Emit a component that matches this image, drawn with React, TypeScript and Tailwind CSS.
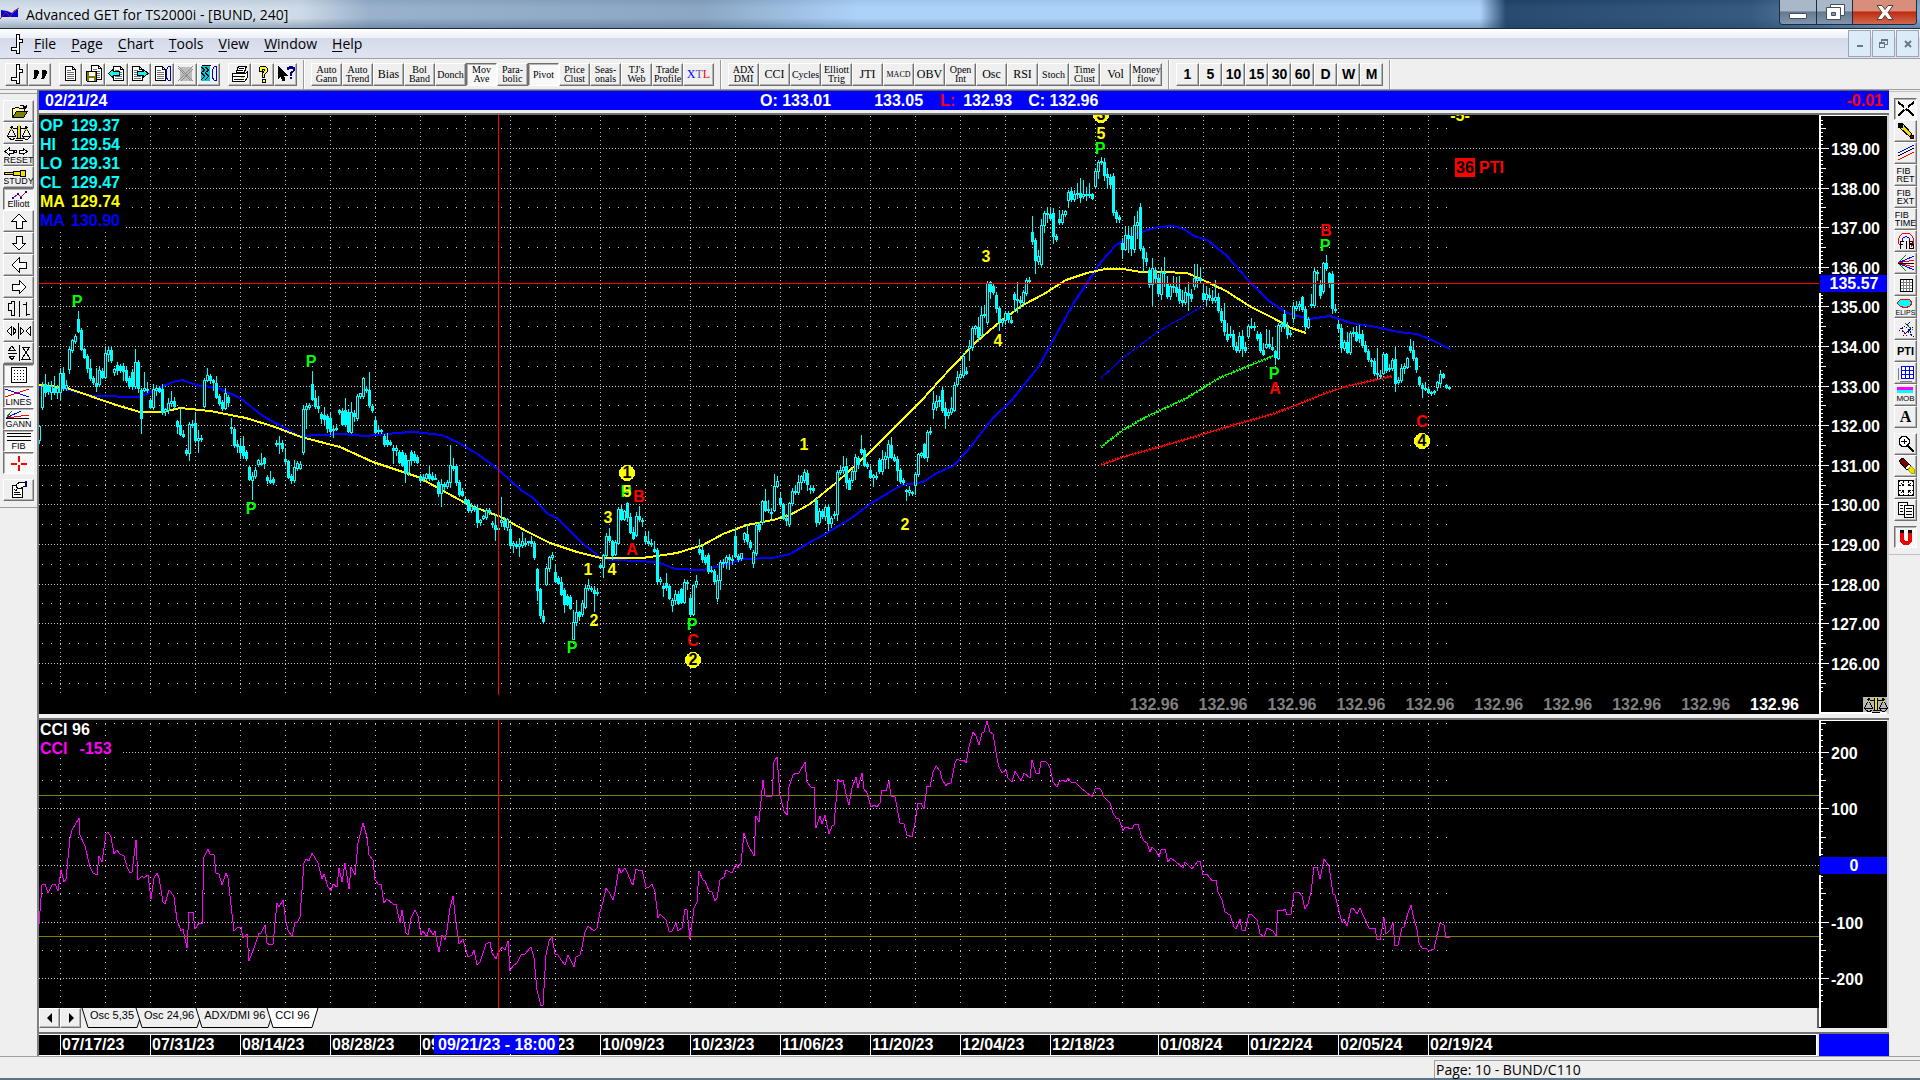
import React from 'react';
import clsx from 'clsx';

// ---------------------------------------------------------------------------
// Dados do gráfico
// ---------------------------------------------------------------------------

// cada bloco: x inicial e barras "máxima abertura fechamento mínima", uma a cada 3px
const BAR_RUNS: [number, string][] = [
  [39, '425 440 426 443,382 407 386 409,374 384 392 396,382 386 391 394,381 392 386 399,376 388 392 394,385 392 388 398,368 392 373 400,367 373 388 390,380 388 385 390,346 369 349 373,339 350 340 352,334 341 336 343,311 319 331 332,328 330 349 350,348 349 357 358,354 356 368 372,359 368 378 380,376 378 382 384,368 383 386 391,366 384 370 386,368 371 377 378,347 377 353 378,346 354 350 361,346 350 360 362,368 372 369 375,362 365 370 374,364 366 370 372,363 366 371 380,366 370 380 382,376 378 386 388,369 372 386 389,349 386 362 388,360 362 388 392,388 390 418 433,372 390 388 391,382 389 390 392,398 400 407 408,384 407 389 409,385 390 388 395,386 388 391 392,384 389 412 414,408 411 409 415,398 410 403 413,391 403 401 406,397 401 406 408'],
  [177, '420 421 426 433,409 425 434 435,430 434 436 437,448 450 453 455,422 453 424 460,420 424 425 427,413 423 440 442,430 440 438 452,435 438 438 441,378 406 380 407,368 380 375 381,374 376 380 383,379 380 382 390,376 383 397 398,394 396 403 405,400 402 408 410,388 408 393 409,395 397 402 406,418 427 428 433,427 429 445 447,440 444 446 452,438 446 452 458,436 446 455 458,450 452 458 460,465 467 479 480,472 480 476 499,467 476 470 478,459 464 460 466,453 463 463 465,457 458 463 468,475 477 480 483,471 480 482 483,477 479 482 484,440 444 443 446,436 444 443 453,440 443 448 451,449 459 461 463,460 461 477 478,474 476 480 483,460 480 467 482,461 468 463 470,461 468 464 469'],
  [303, '406 452 409 454,403 409 406 428,403 407 405 409,371 384 399 400,390 398 406 408,396 406 408 412,412 414 418 423,407 415 419 424,414 416 428 432,413 418 431 434,426 430 429 437,424 429 428 430,409 410 412 414,408 411 424 425,398 410 424 426,409 412 431 432,402 432 412 433,410 413 416 421,394 418 396 420,393 396 393 398,377 396 378 398,387 389 390 392,372 390 405 407,404 406 410 412,417 420 432 433,425 430 430 433,429 430 431 433,434 436 444 446,433 440 444 446,440 442 444 445,446 448 450 463,445 450 448 455,450 452 462 463,450 452 465 466,453 455 473 482,461 472 460 475,450 452 460 464,451 454 460 462,455 457 462 463'],
  [420, '474 476 480 482,474 477 478 481,473 478 474 480,466 474 478 480,472 476 479 480,474 478 478 479,480 482 493 496,479 493 484 506,482 484 486 490,480 486 482 488,445 482 465 487,458 466 468 470,464 466 482 484,480 482 494 496,488 491 495 496,497 499 502 504,499 500 510 512,503 510 506 512,504 507 509 511,505 508 522 527,519 522 520 525,515 518 516 519,508 517 510 519,508 510 512 514,521 523 524 527,514 525 529 540,524 529 528 534,497 522 520 526,517 521 526 529,518 527 519 530,525 529 545 547,541 545 543 552,541 544 546 548,538 546 544 556,532 545 541 547,538 543 544 546,541 542 541 545,536 541 543 546,541 543 557 559,568 569 590 600,588 589 615 618,610 616 621 622,566 584 568 585,556 568 557 571,552 557 555 559,565 572 581 582,576 578 583 584,577 582 594 595,588 590 604 612,594 596 604 605,595 597 608 609'],
  [573, '610 639 622 639,600 622 612 625,611 612 616 620,600 614 603 616,585 607 588 608,579 588 585 590,586 588 589 591,586 590 593 611,588 592 593 595,563 565 567 568,554 567 555 577,533 555 536 556,528 536 540 542,540 541 555 559,540 554 542 555,507 543 509 544,505 509 519 520,510 519 511 520,502 503 517 521,513 517 532 533,527 532 538 539,512 535 516 536,506 516 519 521,518 520 520 526,531 536 541 543,531 541 543 545,539 543 544 546,541 549 551 552,548 550 581 583,577 581 579 583,583 586 588 596,573 583 587 590,584 586 598 599,598 605 600 611,590 600 594 604,591 594 603 604,588 589 602 603,579 602 582 603,580 582 583 589,594 598 614 615,584 614 585 615,575 584 581 587'],
  [699, '539 549 552 554,545 550 559 562,555 557 562 564,553 555 571 573,566 571 570 572,569 571 581 583,575 598 580 601,560 580 562 589,559 563 562 567,555 562 557 568,554 557 559 569,555 559 560 564,527 536 556 557,554 556 559 561,553 558 553 560,532 539 533 542,525 534 541 543,540 542 547 549,550 563 552 567,523 553 525 555,522 524 529 531,500 522 501 523,489 501 510 511,500 509 510 512,508 513 512 518,474 510 486 511,476 486 481 487,493 498 504 506,503 504 518 519,514 518 520 525,502 524 503 526,488 503 491 505,485 492 491 494,475 492 482 494,475 482 476 489,469 480 472 482,470 473 484 490,485 488 489 493,485 488 490 492'],
  [816, '498 500 522 526,508 522 511 524,509 511 516 518,505 516 507 519,504 507 523 530,516 523 518 527,511 515 514 518,470 514 472 520,466 472 470 474,456 470 467 473,458 466 482 488,478 480 489 489,468 480 471 482,454 471 457 479,456 458 464 468,435 449 452 454,448 450 465 466,462 464 466 468,466 470 477 478,474 477 475 486,472 477 476 479,458 460 471 473,450 471 459 474,452 459 456 468,440 457 444 468,437 445 457 458,454 457 460 461,456 459 470 480,468 470 481 483,478 480 482 484,489 490 491 500,486 492 490 495,491 493 492 495,472 485 474 494,453 474 454 476,452 455 453 457,443 444 457 458,430 457 432 461,427 432 431 434'],
  [933, '391 409 403 418,395 407 401 410,396 401 400 406,386 390 410 412,402 408 415 428,409 415 412 418,397 412 408 414,382 410 385 411,371 384 377 386,370 377 374 378,353 375 356 377,367 371 373 374,340 348 346 360,326 347 328 350,325 328 326 334,317 327 337 341,306 335 315 336,305 315 314 317,281 322 283 324,281 282 291 298,284 286 292 294,292 295 308 312,306 308 321 330,318 322 320 326,311 320 313 323,311 313 319 322,316 320 322 323,292 294 299 311,282 299 300 312,296 300 302 308,290 302 292 304,278 293 280 295,277 281 280 283'],
  [1032, '216 232 241 244,238 240 260 273,250 261 256 264,219 264 225 266,211 225 213 232,207 214 213 222,207 214 218 220,208 213 236 243,234 236 239 241,210 219 222 224,210 222 214 224,210 214 211 216,190 200 192 206,187 191 199 201,190 199 194 201,183 194 193 198,178 193 197 202,180 196 194 198,187 194 195 200,183 195 194 197,193 194 198 199,169 186 171 187,160 171 162 178,157 162 161 164,158 162 175 180,168 174 177 188,174 177 184 187,173 176 212 215,210 212 218 222,215 217 219 222'],
  [1122, '238 243 249 258,226 249 235 250,226 235 238 252,228 236 248 255,216 249 225 252,211 225 222 238,203 207 248 250,246 248 258 271,252 258 261 265,268 270 284 287,258 284 268 305,267 270 278 282,274 278 293 295,268 294 272 299,257 272 273 286,276 283 296 298,283 296 286 299,276 286 287 292,277 287 292 296,276 289 300 303,290 300 302 305,287 302 292 304,282 293 295 310,289 294 298 301,264 286 278 289,264 280 278 287,267 278 280 283,285 293 299 301,286 299 294 306,288 295 297 300,290 298 300 303,280 300 297 302,293 297 310 312,308 311 320 322,303 320 331 335,323 334 339 341,326 334 334 337,330 334 346 349,342 346 350 352,332 350 336 352,330 336 348 356,342 347 350 352'],
  [1248, '324 336 326 338,318 327 326 328,322 326 327 330,331 334 338 340,332 334 350 352,343 350 354 355,329 347 344 348,330 344 346 348,337 347 349 350,350 351 357 364,323 358 325 359,321 326 324 331,310 314 326 328,322 327 334 338,330 333 334 336,302 318 306 322,301 308 306 310,301 306 304 310,296 297 309 311,307 309 326 330,317 327 319 328,294 304 305 307,268 305 271 307,270 272 272 280,280 285 295 298,262 291 263 293,255 263 268 270,272 273 283 287,271 274 308 313,304 309 309 312'],
  [1338, '321 324 328 331,324 328 347 352,340 348 342 350,332 342 352 353,331 352 333 354,327 332 332 336,327 332 340 341,325 334 338 342,330 334 345 347,341 345 351 352,349 351 359 361,358 360 361 366,358 361 373 375,348 373 374 378,370 375 376 378,353 373 354 374,353 354 370 372,364 369 368 371,358 368 360 370,347 359 383 391,377 382 380 384,364 380 368 382,363 368 366 373,357 367 358 368,339 346 350 352,341 350 358 360,357 358 369 372,376 377 384 385,383 385 388 397,382 388 389 390,386 389 392 393,391 393 392 395,390 391 392 394,381 387 382 390,370 383 374 387,373 374 377 378,384 385 387 388,386 387 387 389'],
];

const BARS = BAR_RUNS.flatMap(([x0, run]) =>
  run.split(',').map((bar, i) => {
    const [high, open, close, low] = bar.split(' ').map(Number);
    return { x: x0 + i * 3, high, open, close, low };
  })
);

const MA_YELLOW =
  '39,385 50,386 67,388 93,397 116,405 140,412 163,412 180,408 210,411 246,418 275,427 301,437 340,447 373,462 418,477 438,488 469,505 501,517 526,531 550,543 577,552 601,558 610,558 643,558 677,553 703,545 723,534 747,525 773,520 790,515 810,504 837,482 870,452 893,429 922,400 930,391 951,368 976,342 1001,321 1023,305 1044,294 1066,280 1087,273 1105,269 1123,269 1141,272 1162,272 1187,273 1201,279 1226,291 1251,307 1273,318 1291,328 1306,333';
const MA_BLUE =
  '39,387 60,388 93,396 140,397 161,387 173,382 182,380 199,386 216,387 240,398 263,416 299,436 324,435 342,434 365,436 397,433 414,432 442,435 459,443 479,455 499,470 522,491 532,497 548,514 557,518 581,542 601,558 610,560 643,561 660,563 675,569 703,570 727,564 743,559 773,558 790,554 807,544 827,533 850,519 870,504 893,490 903,485 923,482 937,473 953,466 968,450 993,418 1012,400 1039,366 1073,304 1087,283 1101,262 1116,245 1130,237 1144,231 1159,227 1173,226 1184,229 1194,236 1207,240 1226,255 1248,280 1269,301 1287,313 1309,319 1330,316 1351,323 1376,327 1398,332 1417,334 1434,341 1450,349';
const CHANNELS = [
  { color: '#0000ff', ticks: '1 8', points: '1101,378 1123,358 1159,331 1203,306' },
  { color: '#00ff00', ticks: '1 2', points: '1101,447 1123,430 1148,416 1187,398 1219,378 1273,356' },
  { color: '#ff0000', ticks: '1 2', points: '1101,465 1123,457 1159,447 1187,439 1223,428 1273,414 1294,406 1326,393 1344,387 1392,376' },
];

const CCI_LINE =
  '39,924 42,885 45,884 48,893 52,885 55,884 58,891 61,870 64,882 66,879 70,838 72,830 79,818 80,835 85,846 90,867 93,873 97,875 99,856 102,862 106,834 108,832 111,837 114,854 117,850 120,854 124,856 127,867 130,873 132,872 136,840 138,880 142,876 144,878 148,875 151,899 154,878 157,873 159,878 163,902 165,904 169,890 171,892 174,897 177,920 181,931 183,929 187,948 189,912 193,912 195,929 199,923 202,924 204,857 208,849 210,854 214,855 216,873 219,874 222,885 226,873 228,878 231,905 234,931 238,927 241,927 243,938 247,934 249,961 254,948 259,933 261,933 265,925 267,943 270,945 273,944 277,903 279,907 283,900 286,922 288,930 292,937 295,922 297,923 300,917 304,863 306,859 309,861 312,853 318,863 322,879 324,874 328,887 331,891 333,884 337,887 339,868 342,882 345,863 349,889 351,867 355,875 358,843 363,823 367,837 369,855 373,860 375,880 378,884 381,884 384,903 387,899 393,904 396,904 400,923 402,910 406,933 408,935 411,918 415,910 418,916 421,935 423,931 427,937 429,928 433,935 435,931 439,952 442,935 445,940 447,930 450,908 453,896 456,923 459,944 463,939 465,947 468,957 472,955 474,950 477,965 480,962 486,944 490,942 492,953 496,959 498,953 502,947 505,950 508,941 510,971 513,966 517,963 521,955 525,954 531,947 534,958 537,990 541,1006 543,1005 546,955 549,941 552,937 555,954 558,955 561,960 565,965 568,955 571,961 574,967 576,957 580,955 582,947 585,932 588,926 594,931 597,928 600,912 603,902 606,888 609,892 613,900 615,892 619,868 621,873 625,868 628,874 631,882 633,885 636,869 640,871 642,870 646,887 648,888 652,884 655,892 658,918 660,914 666,920 669,931 672,931 676,923 678,931 682,928 685,909 687,910 690,939 694,908 697,902 699,871 703,880 705,881 709,891 712,892 715,901 717,898 720,880 724,877 726,870 732,873 736,864 738,868 741,863 744,833 748,845 754,856 756,816 759,822 763,780 765,795 768,797 772,796 774,762 777,757 780,795 784,811 787,815 789,787 793,775 796,773 799,773 805,762 807,782 811,787 814,787 816,828 820,816 822,824 825,815 829,834 832,826 834,825 838,779 840,782 843,780 847,798 849,805 852,788 856,777 858,788 862,773 864,789 867,793 871,807 874,805 877,807 880,803 882,790 886,791 889,781 891,796 895,797 900,823 904,824 907,835 912,837 915,823 918,803 921,803 924,809 927,786 930,787 933,772 936,766 940,771 942,779 946,786 948,783 951,783 955,763 957,759 961,761 964,760 966,763 969,747 973,732 976,736 979,745 982,733 984,732 987,721 990,732 993,734 997,758 999,767 1002,773 1006,770 1008,778 1012,782 1015,771 1018,776 1021,781 1024,773 1030,778 1032,760 1036,773 1039,774 1041,762 1045,761 1048,764 1050,768 1053,782 1057,787 1059,782 1063,780 1066,782 1068,778 1071,782 1075,782 1081,788 1086,792 1092,797 1095,789 1099,788 1101,790 1104,797 1110,803 1113,813 1116,818 1119,819 1123,831 1125,827 1132,829 1134,825 1138,824 1141,835 1144,841 1147,843 1150,852 1152,847 1156,851 1159,857 1161,850 1165,849 1168,862 1171,858 1176,862 1183,868 1185,862 1192,869 1195,865 1198,861 1200,861 1203,875 1207,874 1212,881 1216,880 1218,892 1222,900 1225,912 1230,915 1234,927 1236,929 1240,919 1242,930 1245,931 1249,914 1251,914 1257,920 1260,934 1264,937 1267,928 1273,931 1276,936 1278,910 1282,911 1285,909 1287,915 1291,914 1294,893 1299,892 1302,896 1305,909 1308,904 1311,892 1314,867 1317,867 1320,879 1324,859 1327,863 1329,866 1333,894 1335,895 1342,923 1344,919 1347,926 1351,909 1353,908 1357,914 1360,908 1363,915 1369,928 1371,929 1375,928 1377,939 1380,940 1384,918 1386,934 1390,930 1393,923 1395,946 1398,945 1402,928 1404,927 1408,913 1411,905 1413,915 1417,930 1419,943 1422,948 1426,948 1429,951 1434,949 1437,935 1440,923 1444,925 1446,938 1450,937';

const GRID_X = [
  ...Array.from({ length: 24 }, (_, i) => 60 + i * 45),
  1122, 1158, 1203, 1248, 1293, 1338, 1383, 1428,
];

const LIME = '#00ff00';
const YELLOW = '#ffff00';
const RED = '#ff0000';

const WAVE_LABELS: [string, number, number, string][] = [
  ['P', 77, 307, LIME],
  ['P', 311, 367, LIME],
  ['P', 251, 514, LIME],
  ['P', 572, 653, LIME],
  ['3', 608, 523, YELLOW],
  ['1', 588, 575, YELLOW],
  ['4', 612, 575, YELLOW],
  ['2', 594, 626, YELLOW],
  ['P', 626, 497, LIME],
  ['5', 627, 497, YELLOW],
  ['B', 639, 502, RED],
  ['A', 632, 555, RED],
  ['1', 804, 450, YELLOW],
  ['2', 905, 530, YELLOW],
  ['P', 692, 630, LIME],
  ['C', 693, 646, RED],
  ['3', 986, 262, YELLOW],
  ['4', 998, 346, YELLOW],
  ['5', 1101, 139, YELLOW],
  ['P', 1100, 154, LIME],
  ['B', 1326, 236, RED],
  ['P', 1325, 251, LIME],
  ['P', 1274, 379, LIME],
  ['A', 1275, 394, RED],
  ['C', 1422, 427, RED],
  ['-5-', 1460, 121, YELLOW],
];

const WAVE_CIRCLES: [string, number, number][] = [
  ['1', 627, 473],
  ['2', 693, 660],
  ['3', 1101, 115],
  ['4', 1422, 441],
];

const priceY = (p: number) => Math.round(148 + (139 - p) * 39.6);
const cciY = (v: number) => Math.round(865 - v * 0.567);

// ---------------------------------------------------------------------------
// Botões das barras
// ---------------------------------------------------------------------------

const UP = 'border border-t-white border-l-white border-r-[#707070] border-b-[#707070] bg-[#efefef] shadow-[inset_-1px_-1px_0_#b4b4b4]';
const DOWN = 'border border-t-[#707070] border-l-[#707070] border-r-white border-b-white bg-[#f8f8f8] shadow-[inset_1px_1px_0_#b4b4b4]';

interface ToolProps {
  label: string;
  size: string;
  pressed?: boolean;
  children: React.ReactNode;
}

const Tool: React.FC<ToolProps> = ({ label, size, pressed, children }) => (
  <button
    type="button"
    aria-label={label}
    aria-pressed={pressed}
    className={clsx('flex shrink-0 items-center justify-center overflow-hidden', size, pressed ? DOWN : UP)}
  >
    {children}
  </button>
);

const Pix: React.FC<{ w?: number; h?: number; children: React.ReactNode }> = ({ w = 18, h = 18, children }) => (
  <svg width={w} height={h} viewBox={`0 0 ${w} ${h}`} fill="none" stroke="#000" shapeRendering="crispEdges" aria-hidden="true" className="shrink-0">
    {children}
  </svg>
);

const ScalesIcon = () => (
  <Pix w={25} h={16}>
    <path d="M12 0h2v13h-2z" fill="#e8e000" stroke="none" />
    <path d="M11.5 1v12M14.5 1v12M9 15.5h8M9.5 13.5h7M4 2.5h3M19 2.5h3M6.5 3.5h5M14.5 3.5h5M5 1.5h2M19 1.5h2" />
    <path d="M5.5 3.5L1.5 11M5.5 3.5l4 7.5M20.5 3.5l-4 7.5M20.5 3.5l4 7.5M1 11.5h9M15.5 11.5h9M2.5 12.5l2 1.5h3l2-1.5M17 12.5l2 1.5h3l2-1.5" />
    <path d="M3 4.5h4M18 4.5h4" stroke="#d8d000" />
  </Pix>
);

const PageIcon = ({ x = 2, y = 1 }: { x?: number; y?: number }) => (
  <g>
    <path d={`M${x + 0.5} ${y + 0.5}h7l3 3v11h-10z`} fill="#fff" />
    <path d={`M${x + 7.5} ${y + 0.5}v3h3`} />
    <path d={`M${x + 2} ${y + 4.5}h4M${x + 2} ${y + 6.5}h7M${x + 2} ${y + 8.5}h7M${x + 2} ${y + 10.5}h7M${x + 2} ${y + 12.5}h7`} stroke="#707070" />
  </g>
);

const BarIcon = () => (
  <Pix w={12} h={20}>
    <path d="M5.5 .5h3v5h3v3h-3v11h-3v-3h-5v-3h5z" fill="#fff" />
  </Pix>
);

const FILE_TOOLS: { label: string; icon: React.ReactNode }[][] = [
  [
    { label: 'Bar chart', icon: <BarIcon /> },
    {
      label: 'Quote',
      icon: (
        <Pix>
          <path d="M3 5h3l1 1v3l-2 4H3l2-3H3zM11 5h3l1 1v3l-2 4h-2l2-3h-2z" fill="#000" />
        </Pix>
      ),
    },
  ],
  [
    { label: 'New page', icon: <Pix><PageIcon x={3} /></Pix> },
    {
      label: 'Save pages',
      icon: (
        <Pix>
          <PageIcon x={6} y={0} />
          <path d="M1.5 6.5h10v10h-9l-1-1z" fill="#7a7a00" />
          <path d="M4 7h6v4H4zM4 13h5v3H4z" fill="#fff" stroke="none" />
        </Pix>
      ),
    },
    {
      label: 'Previous page',
      icon: (
        <Pix>
          <PageIcon x={5} />
          <path d="M.5 8.5l5-4.500v2.500h6v4h-6v2.500z" fill="#00ffff" />
        </Pix>
      ),
    },
    {
      label: 'Next page',
      icon: (
        <Pix>
          <PageIcon x={1} />
          <path d="M17 8.5l-5-4.500v2.500H6v4h6v2.500z" fill="#00ffff" />
        </Pix>
      ),
    },
    {
      label: 'Turn page',
      icon: (
        <Pix>
          <PageIcon x={1} />
          <path d="M14.500 1.500c-3 3-3 11 0 14M14 1.500h2v14h-2M12 12l2 3" stroke="#0000c0" />
        </Pix>
      ),
    },
    {
      label: 'Delete page',
      icon: (
        <Pix>
          <path d="M3 2h12v14H3z" fill="#bdbdbd" stroke="none" />
          <path d="M1 1l15 15M16 1L1 16M1 3l13 13M16 4L4 16" stroke="#8d8d8d" />
        </Pix>
      ),
    },
    {
      label: 'Refresh pages',
      icon: (
        <Pix>
          <path d="M1 1h9v15H1z" fill="#00c8d8" stroke="none" />
          <path d="M1 2l4 3-4 3 4 3-4 4M5 2l4 3-4 3 4 3-4 4M1.500 .5h9" />
          <path d="M14.500 1.500c-3 3-3 11 0 14M14 1.500h2v14h-2M12 12l2 3" stroke="#0000c0" />
        </Pix>
      ),
    },
  ],
  [
    {
      label: 'Print',
      icon: (
        <Pix>
          <path d="M5.5 7l2-6h8l-2 6zM1.5 8.5h13l2-2v6l-3 4h-12z" fill="#fff" />
          <path d="M8 3.5h5M7 5.5h5M2 11.5h12M3 14.5h10" />
          <path d="M10 12.5h3" stroke="#e0d000" />
        </Pix>
      ),
    },
    {
      label: 'Help',
      icon: (
        <Pix>
          <path d="M5 6V3l2-2h4l2 2v4l-3 3v2H8V9l2-3V4H8v2zM8 14h3v3H8z" fill="#ffff00" />
        </Pix>
      ),
    },
    {
      label: 'Context help',
      icon: (
        <Pix>
          <path d="M1 1v13l3-3 2 5 2-1-2-5h4z" fill="#000" />
          <path d="M11 5V3h1.500V2H15v1h1.500v3L14 8v3M14 12v2" stroke="#000080" strokeWidth="2" />
        </Pix>
      ),
    },
  ],
];

const STUDY_TOOLS = [
  'Auto|Gann', 'Auto|Trend', 'Bias', 'Bol|Band', 'Donch', 'Mov|Ave', 'Para-|bolic', 'Pivot', 'Price|Clust', 'Seas-|onals', "TJ's|Web", 'Trade|Profile', 'XTL',
];
const PRESSED_STUDIES = ['Mov|Ave', 'Pivot'];
const INDICATOR_TOOLS = [
  'ADX|DMI', 'CCI', 'Cycles', 'Elliott|Trig', 'JTI', 'MACD', 'OBV', 'Open|Int', 'Osc', 'RSI', 'Stoch', 'Time|Clust', 'Vol', 'Money|flow',
];
const INTERVALS = ['1', '5', '10', '15', '30', '60', 'D', 'W', 'M'];

const StudyButton: React.FC<{ name: string }> = ({ name }) => {
  const lines = name.split('|');
  const text = lines.join(' ');
  const compact = name === 'MACD' ? 'text-[8px]' : name.length > 4 ? 'text-[10px]' : 'text-[12px]';
  return (
    <Tool label={text} size="w-[31px] h-[23px]" pressed={PRESSED_STUDIES.includes(name)}>
      <span className={clsx('font-["Liberation_Serif",serif] text-center leading-[9px]', compact)}>
        {name === 'XTL' ? (
          <>
            <span className="text-[#0000ff]">X</span>
            <span className="text-[#7050a0]">T</span>
            <span className="text-[#ff0000]">L</span>
          </>
        ) : (
          lines.map((line) => (
            <span key={line} className="block">{line}</span>
          ))
        )}
      </span>
    </Tool>
  );
};

const Divider = () => <div className="mx-[6px] h-[29px] w-[2px] shrink-0 border-l border-[#9a9a9a] bg-white" />;

const Word: React.FC<{ children: string; className?: string }> = ({ children, className }) => (
  <span className={clsx('block text-[9px] leading-[8px]', className)}>{children}</span>
);

const LEFT_TOOLS: { label: string; pressed?: boolean; icon: React.ReactNode }[] = [
  {
    label: 'Open',
    icon: (
      <Pix w={20} h={17}>
        <path d="M3.5 14V5.5h2l1-1h3l1 1h5v3" fill="#fff6a0" />
        <path d="M3.5 14.5l4-6h11l-4 6z" fill="#808000" />
        <path d="M11 2.5h2l3 1v2M14 4.5h4M17.5 2v2" />
      </Pix>
    ),
  },
  { label: 'Scales', icon: <ScalesIcon /> },
  {
    label: 'Reset',
    icon: (
      <span>
        <Pix w={24} h={9}>
          <path d="M1 4.5L5 1v2h4v3H5v2zM23 4.5L19 1v2h-4v3h4v2zM10.5 3.5h2v2h-2z" fill="#fff" />
        </Pix>
        <Word className="text-[8px]">RESET</Word>
      </span>
    ),
  },
  {
    label: 'Study',
    icon: (
      <span>
        <Pix w={24} h={8}>
          <path d="M1.5 3h9v2h-9zM10.5 2h7v4h-7zM17.5 1h5v6h-5z" fill="#f0e000" />
        </Pix>
        <Word className="text-[8px]">STUDY</Word>
      </span>
    ),
  },
  {
    label: 'Elliott',
    pressed: true,
    icon: (
      <span>
        <Pix w={24} h={9}>
          <path d="M6 7l5-4 3 3 5-5" stroke="#ff0000" />
          <path d="M5 6h2v2H5zM10 2h2v2h-2zM13 6h2v2h-2zM18 0h2v2h-2z" fill="#0000ff" stroke="none" />
        </Pix>
        <span className="block text-[9px] leading-[8px]">Elliott</span>
      </span>
    ),
  },
  { label: 'Up', icon: <Pix><path d="M9 2l7 7h-4v7H6V9H2z" fill="#fff" /></Pix> },
  { label: 'Down', icon: <Pix><path d="M9 16l7-7h-4V2H6v7H2z" fill="#fff" /></Pix> },
  { label: 'Left', icon: <Pix><path d="M2 9l7-7v4h7v6H9v4z" fill="#fff" /></Pix> },
  { label: 'Right', icon: <Pix><path d="M16 9L9 2v4H2v6h7v4z" fill="#fff" /></Pix> },
  {
    label: 'Bar width',
    icon: (
      <Pix w={24} h={18}>
        <path d="M1.5 3v7h3v5h3V1h-3v2zM12.5 1v16M16 4.5h3M19.5 2v14M19 14.5h4" />
      </Pix>
    ),
  },
  {
    label: 'Spread bars',
    icon: (
      <Pix w={25} h={16}>
        <path d="M5 4v8L1 8zM7 4v8l3-4zM14 4v8l4-4zM24 4v8l-4-4z" fill="#fff" />
        <path d="M12.5 0v16" />
      </Pix>
    ),
  },
  {
    label: 'Scale bars',
    icon: (
      <Pix w={24} h={18}>
        <path d="M2 6l3-4 3 4zM2 12l3 4 3-4zM1 9.5h9M12.5 1v16M15 3h8l-4 5 4 7h-8l4-7z" />
      </Pix>
    ),
  },
  {
    label: 'Grid',
    pressed: true,
    icon: (
      <Pix>
        <path d="M1.5 1.5h15v15h-15z" fill="#fff" />
        <path d="M4 4.5h12M4 7.5h12M4 10.5h12M4 13.5h12" strokeDasharray="1 2" />
      </Pix>
    ),
  },
  {
    label: 'Lines',
    pressed: true,
    icon: (
      <span>
        <Pix w={25} h={10}>
          <path d="M0 1l24 8" stroke="#0000ff" />
          <path d="M0 9l24-8" stroke="#ff0000" />
        </Pix>
        <Word className="text-[8px]">LINES</Word>
      </span>
    ),
  },
  {
    label: 'Gann',
    pressed: true,
    icon: (
      <span>
        <Pix w={25} h={10}>
          <path d="M1 8.5h23" />
          <path d="M1 8l23-3M1 8l5-2" stroke="#ff0000" />
          <path d="M1 8l15-7" stroke="#0000ff" />
          <path d="M1 8l6-7" stroke="#008000" />
        </Pix>
        <Word className="text-[8px]">GANN</Word>
      </span>
    ),
  },
  {
    label: 'Fibonacci',
    pressed: true,
    icon: (
      <span>
        <Pix w={24} h={10}>
          <path d="M0 1.5h24M0 4.5h24M0 8.5h24" />
        </Pix>
        <Word className="text-[8px]">FIB</Word>
      </span>
    ),
  },
  { label: 'Crosshair', pressed: true, icon: <Pix><path d="M9 2v6M9 11v6M1 9.5h6M11 9.5h6" stroke="#ff0000" strokeWidth="2" /></Pix> },
];

const RIGHT_TOOLS: { label: string; pressed?: boolean; icon: React.ReactNode }[][] = [
  [
    {
      label: 'Cross',
      pressed: true,
      icon: (
        <Pix>
          <path d="M1 2l6 5M17 2l-6 5M1 16l6-6M17 16l-6-6" strokeWidth="2" />
          <path d="M9 8v3M8 9.5h3" />
        </Pix>
      ),
    },
    {
      label: 'Pencil',
      icon: (
        <Pix>
          <path d="M2 2l3-1 10 11-2 3L2 5z" fill="#f0e000" />
          <path d="M1 1h4v4H1z" fill="#000" />
          <path d="M13 13h3v3h-3z" fill="#800000" />
        </Pix>
      ),
    },
    {
      label: 'Parallel lines',
      icon: (
        <Pix>
          <path d="M1 9l16-8" stroke="#0000ff" />
          <path d="M1 12l16-8" />
          <path d="M1 16l16-8" stroke="#ff0000" />
        </Pix>
      ),
    },
    { label: 'Fib retracement', icon: <span className="text-left"><Word>FIB</Word><Word>RET</Word></span> },
    { label: 'Fib extension', icon: <span className="text-left"><Word>FIB</Word><Word>EXT</Word></span> },
    { label: 'Fib time', icon: <span className="text-left"><Word>FIB</Word><Word className="text-[8px]">TIME</Word></span> },
    {
      label: 'Fib arc',
      icon: (
        <Pix>
          <path d="M2 12C0 7 3 1 9 1s9 6 7 11l-2 3M2 12l2 2" stroke="#ff0000" />
          <path d="M5 10c0-7 8-7 8 0" stroke="#0000ff" />
          <path d="M3.5 9v8M4 9.5h3M4 12.5h2M9.5 9v8M12.5 9v8M13 9.5h2v2h-2M13 12.5h3v4h-3" />
        </Pix>
      ),
    },
    {
      label: 'Gann fan',
      icon: (
        <Pix>
          <path d="M1 9l8-8M1 9l8 8" stroke="#008000" />
          <path d="M1 9l16-7M1 9l16 7" stroke="#0000ff" />
          <path d="M1 9l16-3M1 9l16 4" stroke="#ff0000" />
          <path d="M1 9.5h16" />
        </Pix>
      ),
    },
    {
      label: 'Gann box',
      icon: (
        <Pix>
          <path d="M3.5 3.5h12v12h-12z" fill="#fff" />
          <path d="M6.5 4v11M9.5 4v11M12.5 4v11M4 6.5h11M4 9.5h11M4 12.5h11" stroke="#808080" />
        </Pix>
      ),
    },
    {
      label: 'Ellipse',
      icon: (
        <span>
          <Pix h={11}>
            <path d="M1 5l3-3 5-1 5 1 2 3-2 3-5 2-5-2z" fill="#00ffff" stroke="#ff0000" />
          </Pix>
          <span className="block text-[7px] leading-[7px]">ELIPS</span>
        </span>
      ),
    },
    {
      label: 'Pitchfork',
      icon: (
        <Pix>
          <path d="M2 11L13 2M11 12l6 5M6 16L17 6M9 7l6 7" stroke="#000090" strokeDasharray="2 1" />
          <path d="M3 8l7 8" stroke="#800000" strokeDasharray="2 1" />
          <path d="M8 3l8 7" stroke="#008000" strokeDasharray="2 1" />
        </Pix>
      ),
    },
    { label: 'PTI', icon: <span className="text-[11px] font-bold">PTI</span> },
    {
      label: 'Grid tool',
      icon: (
        <Pix>
          <path d="M1.5 4v12M3 17.5h12" stroke="#808080" />
          <path d="M4.5 2.5h12v12h-12zM8.5 3v11M12.5 3v11M5 6.5h11M5 10.5h11" fill="#fff" stroke="#0000ff" />
        </Pix>
      ),
    },
    {
      label: 'MOB',
      icon: (
        <span>
          <Pix h={7}>
            <path d="M1 0h16v3H1z" fill="#ff00ff" stroke="none" />
            <path d="M1 3h16v3H1z" fill="#00ffff" stroke="none" />
          </Pix>
          <span className="block text-[8px] leading-[9px]">MOB</span>
        </span>
      ),
    },
    { label: 'Text', icon: <span className='font-["Liberation_Serif",serif] text-[16px] leading-[16px] font-bold'>A</span> },
  ],
  [
    {
      label: 'Zoom',
      icon: (
        <Pix>
          <path d="M5 1.5h4l3 3v4l-3 3H5l-3-3v-4zM4 6.5h6M7 4v5" fill="#fff" />
          <path d="M11 11l6 6" strokeWidth="2" />
        </Pix>
      ),
    },
    {
      label: 'Eraser',
      icon: (
        <Pix>
          <path d="M2 4l4-3 6 6-4 4z" fill="#800000" />
          <path d="M8 11l4-4 2 2-4 4z" fill="#fff" />
          <path d="M11 13l3-4 3 3v4h-3z" fill="#f0e000" stroke="#a0a000" />
        </Pix>
      ),
    },
    {
      label: 'Fit',
      icon: (
        <Pix>
          <path d="M1.5 1.5h15v15h-15z" fill="#fff" />
          <path d="M2 2l5 5M16 2l-5 5M2 16l5-5M16 16l-5-5M2 6.5h4M6.5 2v4M11.5 2v4M12 6.5h4M2 11.5h4M6.5 12v4M11.5 12v4M12 11.5h4" strokeDasharray="2 1" />
        </Pix>
      ),
    },
    {
      label: 'Pages',
      icon: (
        <Pix>
          <path d="M1.5 1.5h9v12h-9z" fill="#fff" />
          <path d="M7.5 4.5h9v12h-9z" fill="#fff" />
          <path d="M3 4.5h3M3 7.5h3M3 10.5h3M9 7.5h6M9 10.5h6M9 13.5h6" />
        </Pix>
      ),
    },
  ],
  [
    {
      label: 'Magnet',
      pressed: true,
      icon: (
        <Pix>
          <path d="M3 5v8l3 4h6l3-4V5h-4v7l-1 1H8l-1-1V5z" fill="#ee0000" stroke="none" />
          <path d="M3 2h4v3H3zM11 2h4v3h-4z" fill="#000" stroke="none" />
        </Pix>
      ),
    },
  ],
];

// ---------------------------------------------------------------------------
// Gráficos
// ---------------------------------------------------------------------------

interface GridProps {
  top: number;
  bottom: number;
  major: number[];
  minor: number[];
  step: string;
}

// as linhas principais passam da borda direita e são cortadas pelo svg
const Grid: React.FC<GridProps> = ({ top, bottom, major, minor, step }) => (
  <g stroke="#c8c8c8">
    {GRID_X.map((x) => (
      <path key={x} d={`M${x + 0.5} ${top}V${bottom}`} strokeDasharray={step} />
    ))}
    {major.map((y) => (
      <path key={y} d={`M39 ${y + 0.5}H4000`} strokeDasharray="1 2" />
    ))}
    {minor.map((y) => (
      <path key={y} d={`M42 ${y + 0.5}H1449`} strokeDasharray="1 8" />
    ))}
  </g>
);

const PriceChart: React.FC = () => (
  <svg className='block h-[582px] w-full font-["Liberation_Sans",Arial,sans-serif] text-[16px] font-bold' role="img" aria-label="BUND 240 price chart">
    <g transform="translate(-39 -115)" shapeRendering="crispEdges" fill="none">
      <Grid
        top={116}
        bottom={694}
        major={Array.from({ length: 14 }, (_, i) => priceY(139 - i))}
        minor={Array.from({ length: 15 }, (_, i) => priceY(139.5 - i))}
        step="1 3"
      />
      <polyline points={MA_BLUE} stroke="#0000ff" strokeWidth="2" />
      <polyline points={MA_YELLOW} stroke="#ffff00" strokeWidth="2" />
      {CHANNELS.map((c) => (
        <g key={c.color} stroke={c.color}>
          <polyline points={c.points} />
          <polyline points={c.points} strokeWidth="3" strokeDasharray={c.ticks} />
        </g>
      ))}
      {BARS.map(({ x, high, open, close, low }) => {
        const top = Math.min(open, close);
        const height = Math.max(Math.abs(open - close), 1);
        return (
          <g key={x}>
            <path d={`M${x + 0.5} ${high}V${low + 1}`} stroke="#00ffff" />
            <rect x={x - 0.5} y={top + 0.5} width="2" height={height} stroke="#00ffff" fill={close < open ? '#000' : '#00ffff'} />
          </g>
        );
      })}
      <path d="M39 283.5H4000" stroke="#ff0000" />
      <path d="M498.5 115V695" stroke="#ff0000" />
      {WAVE_CIRCLES.map(([n, x, y]) => (
        <g key={n}>
          <circle cx={x} cy={y} r="8" fill="#ffff00" />
          <text x={x} y={y + 5} textAnchor="middle" fill="#000">{n}</text>
        </g>
      ))}
      {WAVE_LABELS.map(([t, x, y, color]) => (
        <text key={`${t}-${x}`} x={x} y={y} textAnchor="middle" fill={color}>{t}</text>
      ))}
      <rect x="1455" y="158" width="20" height="19" fill="#ff0000" />
      <text x="1456" y="173" fill="#000">36</text>
      <text x="1479" y="173" fill="#ff0000">PTI</text>
    </g>
  </svg>
);

const CciChart: React.FC = () => (
  <svg className="block h-[288px] w-full" role="img" aria-label="CCI 96 indicator">
    <g transform="translate(-39 -720)" shapeRendering="crispEdges" fill="none">
      <Grid
        top={724}
        bottom={1004}
        major={[200, 100, 0, -100, -200].map(cciY)}
        minor={[250, 150, 50, -50, -150].map(cciY)}
        step="1 4.670"
      />
      {[795.5, 936.5].map((y) => (
        <path key={y} d={`M39 ${y}H4000`} stroke="#808000" />
      ))}
      <polyline points={CCI_LINE} stroke="#ff00ff" />
      <path d="M498.5 720V1008" stroke="#ff0000" />
    </g>
  </svg>
);

interface AxisProps {
  height: string;
  label: string;
  origin: number;
  ticks: { y: number; size: number }[];
  labels: { y: number; text: string }[];
  cursor: { y: number; text: string };
}

const Axis: React.FC<AxisProps> = ({ height, label, origin, ticks, labels, cursor }) => (
  <svg className={clsx('block w-full font-["Liberation_Sans",Arial,sans-serif] text-[16px] font-bold', height)} role="img" aria-label={label}>
    <g transform={`translate(0 ${-origin})`} fill="#fff" shapeRendering="crispEdges">
      <rect x="0" y={origin} width="2" height="700" />
      <rect x="0" y={origin} width="68" height="1" />
      {ticks.map((t) => (
        <rect key={t.y} x="2" y={t.y} width={t.size} height="1" />
      ))}
      {labels.map((l) => (
        <text key={l.text} x="12" y={l.y + 7}>{l.text}</text>
      ))}
      <rect x="0" y={cursor.y - 9} width="70" height="19" fill="#000" />
      <rect x="1" y={cursor.y - 8} width="68" height="17" fill="#0000ff" />
      <text x="35" y={cursor.y + 6} textAnchor="middle">{cursor.text}</text>
    </g>
  </svg>
);

const PRICE_TICKS = Array.from({ length: 145 }, (_, i) => ({
  y: priceY(139.7 - i / 10),
  size: (i - 7) % 10 === 0 ? 8 : (i - 2) % 5 === 0 ? 5 : 2,
}));
const PRICE_LABELS = Array.from({ length: 14 }, (_, i) => ({ y: priceY(139 - i), text: `${139 - i}.00` }));
const CCI_TICKS = Array.from({ length: 50 }, (_, i) => ({
  y: cciY(250 - i * 10),
  size: (i - 5) % 10 === 0 ? 8 : i % 5 === 0 ? 5 : 2,
}));
const CCI_LABELS = [200, 100, -100, -200].map((v) => ({ y: cciY(v), text: String(v) }));

const LEGEND = [
  ['OP', '129.37', 'text-[#00ffff]'],
  ['HI', '129.54', 'text-[#00ffff]'],
  ['LO', '129.31', 'text-[#00ffff]'],
  ['CL', '129.47', 'text-[#00ffff]'],
  ['MA', '129.74', 'text-[#ffff00]'],
  ['MA', '130.90', 'text-[#0000ff]'],
];

const DATES = ['07/17/23', '07/31/23', '08/14/23', '08/28/23', '09/11/23', '09/25/23', '10/09/23', '10/23/23', '11/06/23', '11/20/23', '12/04/23', '12/18/23', '01/08/24', '01/22/24', '02/05/24', '02/19/24'];
const TABS = ['Osc 5,35', 'Osc 24,96', 'ADX/DMI 96', 'CCI 96'];
const MENUS = ['File', 'Page', 'Chart', 'Tools', 'View', 'Window', 'Help'];

// ---------------------------------------------------------------------------
// Janela
// ---------------------------------------------------------------------------

const TitleBar: React.FC = () => (
  <header className="relative flex h-[29px] items-start justify-between border-b border-[#1c2a3c] bg-[linear-gradient(90deg,#d3deea_0px,#cbd8e6_300px,#94adc8_370px,#86a2c0_700px,#a9d0f8_860px,#a9d0f8_1480px,#1d4166_1506px,#2b5278_1750px,#7ea3c8_1900px)]">
    <div className="pointer-events-none absolute inset-0 bg-[linear-gradient(180deg,rgba(40,70,110,0.08)_0px,rgba(255,255,255,0.05)_8px,rgba(255,255,255,0.05)_18px,rgba(50,80,110,0.35)_28px)]" />
    <div className="relative flex h-[28px] items-center gap-[7px]">
      <svg width="19" height="16" viewBox="0 0 19 16" aria-hidden="true">
        <path d="M1 4l6 1 5 2 6-4v8H1z" fill="#0000e0" />
        <path d="M0 13l6-7 4 5 4-6 5-3" fill="none" stroke="#a02020" />
      </svg>
      <h1 className='font-["Open_Sans",sans-serif] text-[14px] text-black [text-shadow:0_0_6px_#fff]'>Advanced GET for TS2000i - [BUND, 240]</h1>
    </div>
    <div className="relative mr-[3px] flex h-[25px] overflow-hidden rounded-b-[4px] border border-t-0 border-[#1b2c40]">
      <button type="button" aria-label="Minimize" className="flex w-[37px] items-end justify-center border-r border-[#1b2c40] bg-[linear-gradient(#a9b8c8_45%,#66788e_50%,#8096ae)] pb-[5px]">
        <span className="h-[6px] w-[18px] rounded-[1px] border border-[#45505e] bg-white" />
      </button>
      <button type="button" aria-label="Restore" className="flex w-[36px] items-center justify-center border-r border-[#1b2c40] bg-[linear-gradient(#a9b8c8_45%,#66788e_50%,#8096ae)]">
        <svg width="20" height="18" viewBox="0 0 20 18" fill="#fff" stroke="#45505e" aria-hidden="true">
          <path d="M5.5 1.5h14v11h-14z" />
          <path d="M1.5 4.5h14v12h-14z" />
          <path d="M6.5 9.5h4v3h-4z" fill="#8096ae" />
        </svg>
      </button>
      <button type="button" aria-label="Close" className="flex w-[63px] items-center justify-center bg-[linear-gradient(#d98e7c_45%,#bf2b10_50%,#cf6a50)]">
        <svg width="18" height="15" viewBox="0 0 18 15" fill="#fff" stroke="#5c3a3a" aria-hidden="true">
          <path d="M1 .5h5l3 4 3-4h5l-5 7 5 7h-5l-3-4-3 4H1l5-7z" />
        </svg>
      </button>
    </div>
  </header>
);

const MenuBar: React.FC = () => (
  <nav className="flex h-[29px] items-center justify-between bg-[linear-gradient(#ffffff,#eef0f8_9px,#d5daea_9px,#e0e4f2)]">
    <div className='flex items-center pl-[11px] font-["Open_Sans",sans-serif] text-[14px] text-black'>
      <BarIcon />
      <div className="ml-[11px] flex gap-[15px]">
        {MENUS.map((m) => (
          <button key={m} type="button">
            <span className="underline underline-offset-2">{m[0]}</span>
            {m.slice(1)}
          </button>
        ))}
      </div>
    </div>
    <div className="flex h-[27px] gap-px pr-px">
      <button type="button" aria-label="Minimize chart" className="flex w-[23px] items-center justify-center border border-[#9aa6b4] bg-[#dcebf8]">
        <span className="mt-[5px] h-[2px] w-[6px] bg-[#66788a]" />
      </button>
      <button type="button" aria-label="Restore chart" className="flex w-[23px] items-center justify-center border border-[#9aa6b4] bg-[#dcebf8]">
        <svg width="9" height="9" viewBox="0 0 9 9" fill="none" stroke="#66788a" shapeRendering="crispEdges" aria-hidden="true">
          <path d="M2.5 3V.5h6v5H6M3 1.5h5M.5 3.5h5v5h-5zM1 4.5h4" />
        </svg>
      </button>
      <button type="button" aria-label="Close chart" className="flex w-[23px] items-center justify-center border border-[#9aa6b4] bg-[#dcebf8]">
        <svg width="8" height="8" viewBox="0 0 8 8" stroke="#66788a" strokeWidth="2" aria-hidden="true">
          <path d="M1 1l6 6M7 1L1 7" />
        </svg>
      </button>
    </div>
  </nav>
);

const TopToolbar: React.FC = () => (
  <div role="toolbar" aria-label="Studies" className="flex h-[32px] items-center overflow-hidden border-t border-b border-t-[#a0a0a0] border-b-[#a0a0a0] pl-[5px]">
    <div className="flex gap-2">
      {FILE_TOOLS.map((group) => (
        <div key={group[0].label} className="flex">
          {group.map((t) => (
            <Tool key={t.label} label={t.label} size="w-[23px] h-[23px]">{t.icon}</Tool>
          ))}
        </div>
      ))}
    </div>
    <Divider />
    <div className="flex">{STUDY_TOOLS.map((s) => <StudyButton key={s} name={s} />)}</div>
    <Divider />
    <div className="flex">{INDICATOR_TOOLS.map((s) => <StudyButton key={s} name={s} />)}</div>
    <Divider />
    <div className="flex">
      {INTERVALS.map((n) => (
        <Tool key={n} label={n} size="w-[23px] h-[23px]">
          <span className="text-[14px] font-bold">{n}</span>
        </Tool>
      ))}
    </div>
    <Divider />
  </div>
);

const TabEdge: React.FC<{ kind: 'first' | 'middle' | 'active' | 'last' }> = ({ kind }) => (
  <svg width="8" height="20" viewBox="0 0 8 20" fill="none" stroke="#000" aria-hidden="true" className="shrink-0">
    {kind === 'active' && <path d="M1 0h7v20z" fill="#fff" stroke="none" />}
    {kind === 'last' && <path d="M0 0h7L1 19H0z" fill="#fff" stroke="none" />}
    {kind === 'last' ? <path d="M7 0L1 19.5H0" /> : <path d="M1 0l6 19.5h1" />}
    {(kind === 'middle' || kind === 'active') && <path d="M4.5 12L2 19.5H0" />}
  </svg>
);

const IndicatorTabs: React.FC = () => (
  <div className="flex h-[20px] items-start border-r-2 border-[#606060] bg-[#efefef]">
    <button type="button" aria-label="Scroll tabs left" className={clsx('flex h-[20px] w-[21px] items-center justify-center', UP)}>
      <svg width="6" height="10" viewBox="0 0 6 10" aria-hidden="true"><path d="M5 0v10L0 5z" /></svg>
    </button>
    <button type="button" aria-label="Scroll tabs right" className={clsx('flex h-[20px] w-[21px] items-center justify-center', UP)}>
      <svg width="6" height="10" viewBox="0 0 6 10" aria-hidden="true"><path d="M1 0v10l5-5z" /></svg>
    </button>
    <div role="tablist" className="flex">
      {TABS.map((t, i) => {
        const active = i === TABS.length - 1;
        return (
          <React.Fragment key={t}>
            <TabEdge kind={i === 0 ? 'first' : active ? 'active' : 'middle'} />
            <button
              type="button"
              role="tab"
              aria-selected={active}
              className={clsx('flex h-[20px] items-start border-b border-black px-px text-[11px] leading-[14px] whitespace-nowrap', active && 'bg-white')}
            >
              {t}
            </button>
          </React.Fragment>
        );
      })}
      <TabEdge kind="last" />
    </div>
  </div>
);

const App: React.FC = () => {
  return (
    <div className='flex min-h-screen flex-col overflow-hidden bg-[#efefef] font-["Liberation_Sans",Arial,sans-serif] text-black'>
      <TitleBar />
      <MenuBar />
      <TopToolbar />

      <main className="flex">
        <aside className="flex w-[37px] shrink-0 flex-col">
          <div role="toolbar" aria-label="Chart tools" className="mt-[3px] flex flex-col border-t border-b border-[#a0a0a0] pt-[6px] pb-[6px] pl-[3px]">
            {LEFT_TOOLS.map((t) => (
              <Tool key={t.label} label={t.label} size="w-[31px] h-[22px]" pressed={t.pressed}>{t.icon}</Tool>
            ))}
            <div className="mt-[5px]">
              <Tool label="Properties" size="w-[31px] h-[22px]">
                <Pix>
                  <path d="M2.5 4.5h10v12h-10z" fill="#fff" />
                  <path d="M4 8.5l2 1 2-3M9 7.5h3M4 11.5h6M4 13.5h7M6 4L10 1h5v4l-4 2H7z" fill="#fff" />
                  <path d="M15 0h2v6h-2z" fill="#000080" stroke="none" />
                </Pix>
              </Tool>
            </div>
          </div>
        </aside>

        <div className="flex min-w-0 flex-1 flex-col border-l-2 border-[#808080]">
          <div className="flex h-[20px] items-center border-t border-[#606060] bg-[#0000ff] pr-[6px] pl-[6px] text-[16px] leading-[19px] font-bold text-white">
            <span className="w-[39%] max-w-[715px] shrink-0">02/21/24</span>
            <span>O: 133.01</span>
            <span className="ml-[43px]">133.05</span>
            <span className="ml-[17px] text-[#ff0000]">L:</span>
            <span className="ml-[8px]">132.93</span>
            <span className="ml-[16px]">C: 132.96</span>
            <span className="ml-auto text-[#ff0000]">-0.01</span>
          </div>

          <section className="mt-[3px] flex border-t-2 border-[#707070]">
            <div className="relative min-w-0 flex-1 overflow-hidden bg-black">
              <PriceChart />
              <dl className="absolute top-px left-0 w-[86px] bg-black pl-px text-[16px] leading-[19px] font-bold">
                {LEGEND.map(([k, v, color]) => (
                  <div key={v} className={clsx('flex', color)}>
                    <dt className="w-[31px]">{k}</dt>
                    <dd>{v}</dd>
                  </div>
                ))}
              </dl>
              <div className="flex h-[17px] justify-end gap-5 pr-[20px] text-[16px] leading-[15px] font-bold text-[#808080]">
                {Array.from({ length: 10 }, (_, i) => (
                  <span key={i} className={i === 9 ? 'text-white' : ''}>132.96</span>
                ))}
              </div>
            </div>
            <div className="flex w-[70px] shrink-0 flex-col border-r-2 border-[#d0d0d0] bg-black">
              <Axis
                height="h-[582px]"
                label="Price scale"
                origin={115}
                ticks={PRICE_TICKS}
                labels={PRICE_LABELS}
                cursor={{ y: 283, text: '135.57' }}
              />
              <div className="flex h-[17px] justify-end border-b-2 border-l-2 border-white">
                <button type="button" aria-label="Rescale" className="flex w-[24px] items-center justify-center bg-[#b8b8b8]">
                  <ScalesIcon />
                </button>
              </div>
            </div>
          </section>

          <section className="mt-[4px] flex border-t-2 border-[#707070]">
            <div className="relative min-w-0 flex-1 bg-black">
              <CciChart />
              <div className="absolute top-0 left-0 text-[16px] leading-[19px] font-bold">
                <p className="w-[52px] bg-black pl-px text-white">CCI 96</p>
                <p className="flex w-[82px] gap-[12px] bg-black pl-px text-[#ff00ff]"><span>CCI</span><span>-153</span></p>
              </div>
              <IndicatorTabs />
            </div>
            <div className="w-[70px] shrink-0 border-r-2 border-[#d0d0d0] bg-black">
              <Axis
                height="h-[307px]"
                label="CCI scale"
                origin={720}
                ticks={CCI_TICKS}
                labels={CCI_LABELS}
                cursor={{ y: 865, text: '0' }}
              />
            </div>
          </section>

          <section className="mt-[4px] flex h-[24px] border-t-2 border-[#707070]">
            <div className="relative mr-[2px] flex min-w-0 flex-1 overflow-hidden border-t border-r border-b border-white bg-black pl-[21px] text-[16px] leading-[19px] font-bold text-white">
              {DATES.map((d) => (
                <span key={d} className={clsx('shrink-0 border-l border-white pl-px', d === '12/18/23' ? 'w-[108px]' : 'w-[90px]')}>{d}</span>
              ))}
              <span className="absolute top-0 left-[395px] h-[19px] bg-[#0000ff] px-[4px] whitespace-nowrap">09/21/23 - 18:00</span>
            </div>
            <div className="w-[70px] shrink-0 bg-[#0000ff]" />
          </section>
        </div>

        <aside className="w-[31px] shrink-0">
          <div role="toolbar" aria-label="Drawing tools" className="mt-px flex flex-col gap-[5px] border-t border-b border-[#c0c0c0] pt-[6px] pb-[6px] pl-[5px]">
            {RIGHT_TOOLS.map((group) => (
              <div key={group[0].label} className="flex flex-col">
                {group.map((t) => (
                  <Tool key={t.label} label={t.label} size="w-[23px] h-[22px]" pressed={t.pressed}>{t.icon}</Tool>
                ))}
              </div>
            ))}
          </div>
        </aside>
      </main>

      <footer className="mt-auto flex h-[24px] justify-end border-t border-b-2 border-t-[#a0a0a0] border-b-[#5a7488] pt-[3px]">
        <p className='w-[486px] border-t border-l border-[#a0a0a0] pl-px font-["Open_Sans",sans-serif] text-[14px] leading-[18px]'>Page: 10 - BUND/C110</p>
      </footer>
    </div>
  );
};

export default App;
